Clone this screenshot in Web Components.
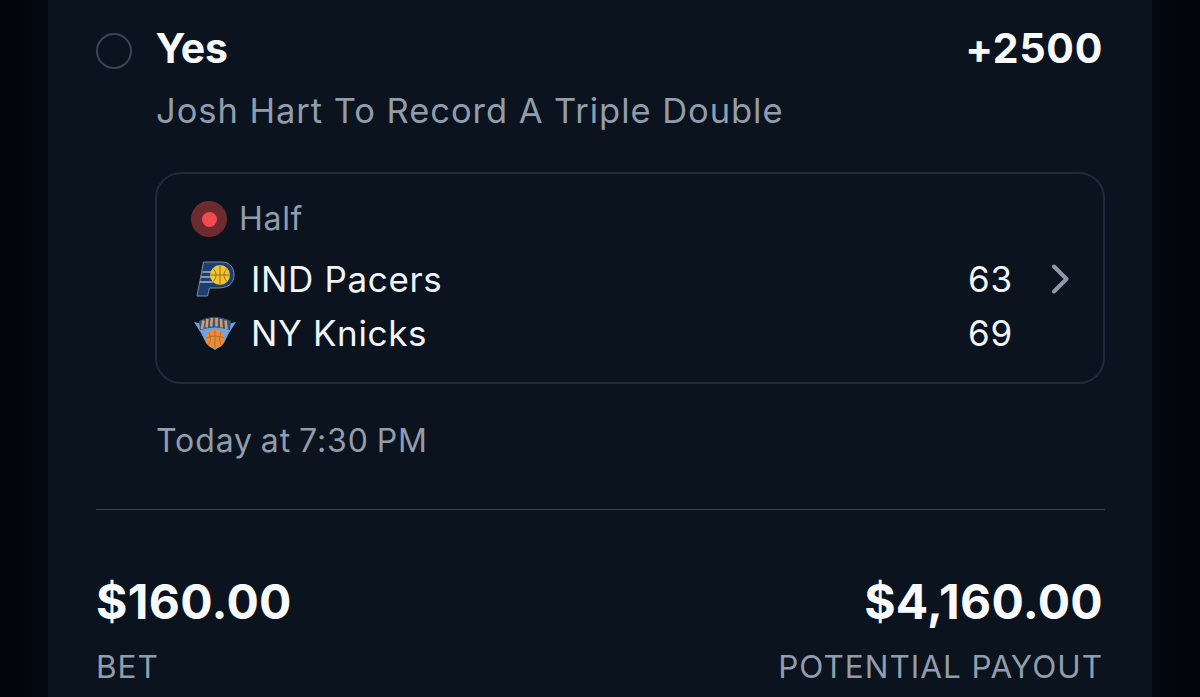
<!DOCTYPE html>
<html lang="en"><head><meta charset="utf-8"><title>Bet</title>
<style>
html,body{margin:0;height:697px;overflow:hidden;background:#02060d}
body{font-family:Inter,"Liberation Sans",sans-serif}
</style></head><body>
<bet-sheet>
  <bet-leg selection="Yes" odds="+2500" market="Josh Hart To Record A Triple Double" time="Today at 7:30 PM">
    <game-card status="Half">
      <team-row name="IND Pacers" score="63" logo="pacers" chevron></team-row>
      <team-row name="NY Knicks" score="69" logo="knicks"></team-row>
    </game-card>
  </bet-leg>
  <bet-totals bet="$160.00" payout="$4,160.00"></bet-totals>
</bet-sheet>
<script>
const def=(name,html)=>customElements.define(name,class extends HTMLElement{
  connectedCallback(){
    if(this.shadowRoot)return;
    const r=this.attachShadow({mode:'open'});
    r.innerHTML=html(this);
  }
});
def('bet-sheet',()=>`<style>
:host{display:block;height:697px;background:linear-gradient(90deg,#010409 0,#030810 48px,#0b131f 48px,#0b131f 1152px,#03070f 1152px,#010409 1200px)}
.in{box-sizing:border-box;margin:0 48px;height:697px;padding:0 47px 0 48px;overflow:hidden;background:#0b131f}
</style><div class="in"><slot></slot></div>`);
def('bet-leg',h=>`<style>
:host{display:block}
.top{display:flex;align-items:center;height:50px;margin-top:23px;color:#f8fafc;font-weight:700;font-size:41px;line-height:50px}
.radio{box-sizing:border-box;width:36px;height:36px;border:2px solid #3a4454;border-radius:50%;margin-right:24px;margin-left:-.500px;flex:none;position:relative;top:3px}
.sel{flex:1;letter-spacing:-.2px}
.odds{letter-spacing:.7px;margin-right:2px}
.body{margin-left:59px}
.mk{font-size:34.500px;line-height:40px;color:#929dab;letter-spacing:.95px;margin-top:18px;margin-left:1px}
.tm{font-size:32px;line-height:40px;color:#929dab;letter-spacing:.9px;word-spacing:-2px;margin-top:37px;margin-left:1px}
::slotted(game-card){margin-top:41px}
hr{border:0;height:1px;background:#39424f;margin:48px 0 0}
</style>
<div class="top"><span class="radio"></span><span class="sel">${h.getAttribute('selection')}</span><span class="odds">${h.getAttribute('odds')}</span></div>
<div class="body"><div class="mk">${h.getAttribute('market')}</div><slot></slot><div class="tm">${h.getAttribute('time')}</div></div>
<hr>`);
def('game-card',h=>`<style>
:host{display:block;box-sizing:border-box;width:950px;height:212px;border:2px solid #1f2b3b;border-radius:26px;padding:23px 34px 0 34px}
.st{display:flex;align-items:center;gap:12px;height:42px;font-size:32px;color:#929dab;letter-spacing:.7px;margin-bottom:13px}
.dot{width:36px;height:36px;border-radius:50%;background:#6d2a2f;display:flex;align-items:center;justify-content:center;position:relative;top:1px}
.dot i{width:15px;height:15px;border-radius:50%;background:#f04b4f;display:block}
</style><div class="st"><span class="dot"><i></i></span><span>${h.getAttribute('status')}</span></div><slot></slot>`);
const logos={
pacers:`<svg width="42" height="42" viewBox="0 0 42 42">
<path d="M9.500 4H28C36 4 40 10 40 17C40 27 32 30 24 30H15.500L13.500 38H3Z" fill="#1b3f73" stroke="#7f8c9c" stroke-width="1"/>
<path d="M8.500 14H20M7.200 19H20M6 24H19" stroke="#aab4c0" stroke-width="1.700"/>
<circle cx="26" cy="17" r="10" fill="#f3c431"/>
<path d="M16.500 17H35.700M26 7.300V26.700M19 10.500C23 14 23 20 19 23.500M33 10.500C29 14 29 20 33 23.500" stroke="#8a6a17" stroke-width=".9" fill="none"/></svg>`,
knicks:`<svg width="42" height="42" viewBox="0 0 42 42">
<path d="M0 10L8 12L21 8L34 12L42 10L35 21L30 31L21 38L12 31L7 21Z" fill="#6ea4dc"/>
<path d="M5 9Q21 1 37 9L36 18Q21 13 6 18Z" fill="#2a5692"/>
<path d="M8 17L9.500 8.500M12.500 15.500L13.500 7M17 14.500L18 6M22.500 14.500L22.500 6M27.500 15.500L27 7M32.500 17L31.500 8.500" stroke="#e09a5c" stroke-width="2.600"/>
<circle cx="21" cy="27" r="9.500" fill="#ea8c3a"/>
<path d="M12 26Q21 22 30 26M21 18V36M15 20Q18 28 14.500 33.500M27 20Q24 28 27.500 33.500" stroke="#a9652b" stroke-width=".8" fill="none"/></svg>`};
def('team-row',h=>`<style>
:host{display:flex;align-items:center;height:54px;font-size:35px;color:#f1f5f9;letter-spacing:.7px}
.lg{width:42px;height:42px;margin-right:15px;margin-left:3px;flex:none;display:block}
.n{flex:1;letter-spacing:.65px}
.s{width:44px;text-align:right;position:relative;left:1px}
.c{width:58px;display:flex;justify-content:flex-end}
</style><span class="lg">${logos[h.getAttribute('logo')]}</span><span class="n">${h.getAttribute('name')}</span><span class="s">${h.getAttribute('score')}</span><span class="c">${h.hasAttribute('chevron')?`<svg width="18" height="30" viewBox="0 0 18 30"><path d="M3 2.500L15.500 15L3 27.500" fill="none" stroke="#8f99a6" stroke-width="4" stroke-linecap="round" stroke-linejoin="round"/></svg>`:''}</span>`);
def('bet-totals',h=>`<style>
:host{display:flex;justify-content:space-between;margin-top:62px}
.v{font-size:48px;line-height:60px;font-weight:700;color:#f8fafc;letter-spacing:.3px}
.l{font-size:31.500px;line-height:40px;color:#929dab;letter-spacing:1px;margin-top:15px}
.r{text-align:right;margin-right:2px}
</style><div><div class="v">${h.getAttribute('bet')}</div><div class="l">BET</div></div>
<div class="r"><div class="v">${h.getAttribute('payout')}</div><div class="l">POTENTIAL PAYOUT</div></div>`);
</script>
</body></html>
